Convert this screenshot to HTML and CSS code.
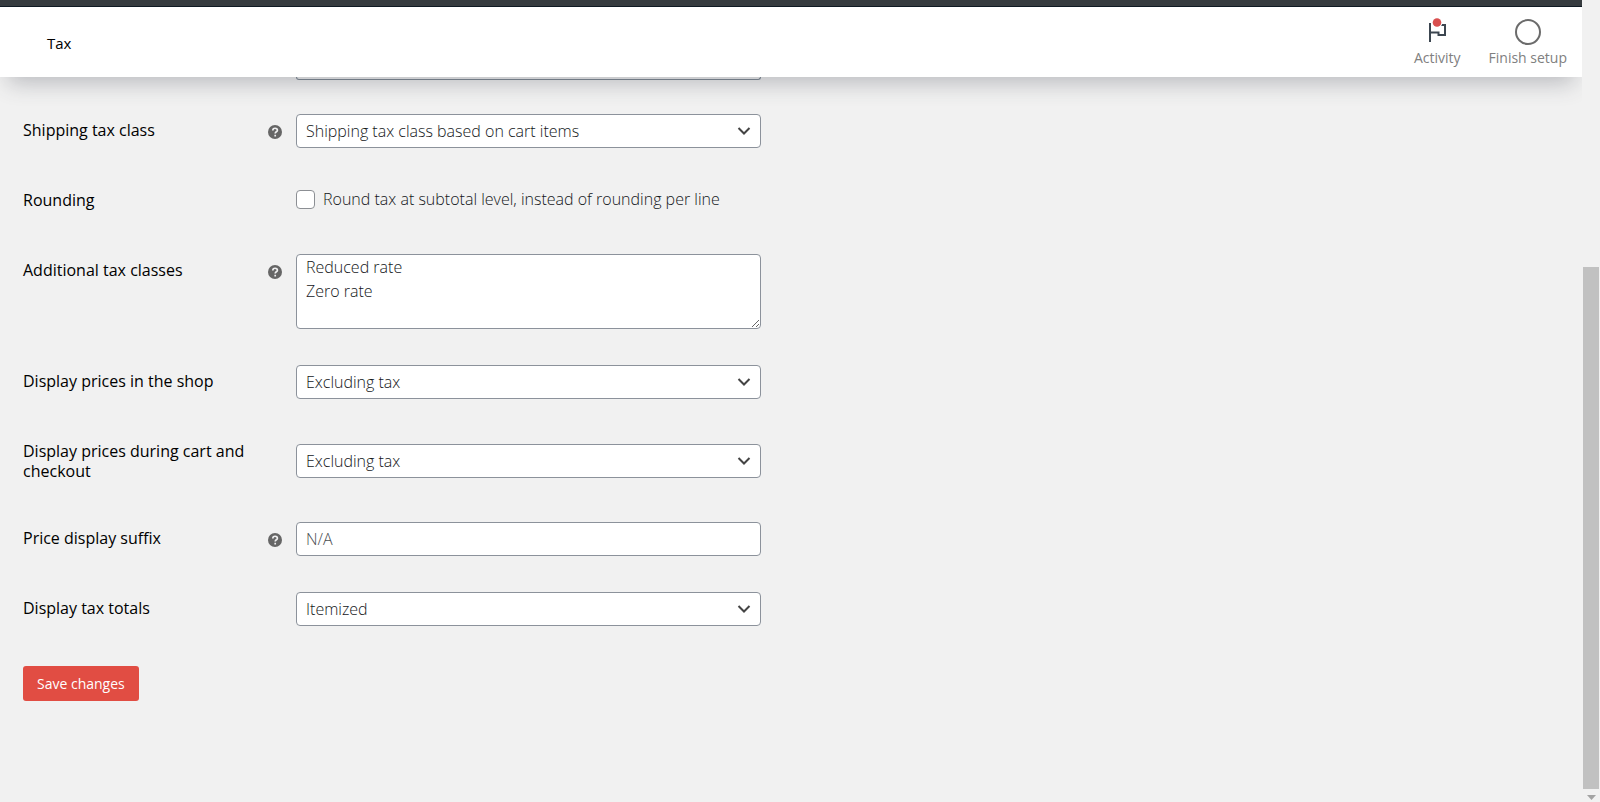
FILE: index.html
```html
<!DOCTYPE html>
<html lang="en">
<head>
<meta charset="utf-8">
<title>Tax settings</title>
<link rel="stylesheet" href="styles.css">
</head>
<body>
<div class="viewport">
  <div class="page">
    <div class="admin-bar"></div>
    <header class="header">
      <h1 class="header-title">Tax</h1>
      <div class="header-actions">
        <button type="button" class="action">
          <svg class="action-icon" viewBox="0 0 28 28" aria-hidden="true">
            <path d="M7 5v19M7 14.500h8.500v2.500h6.500v-10h-4" fill="none" stroke="#3c4650" stroke-width="2"/>
            <circle cx="14" cy="4.500" r="5.300" fill="#fff"/>
            <circle cx="14" cy="4.500" r="4.300" fill="#d94f4f"/>
          </svg>
          <span>Activity</span>
        </button>
        <button type="button" class="action">
          <svg class="action-icon" viewBox="0 0 28 28" aria-hidden="true">
            <circle cx="14" cy="14" r="12" fill="none" stroke="#6b6b6b" stroke-width="2"/>
          </svg>
          <span>Finish setup</span>
        </button>
      </div>
    </header>

    <form class="settings">
      <div class="scrolled-field"></div>
      <div class="row">
        <div class="label-cell">
          <label for="shipping">Shipping tax class</label>
          <svg class="help" viewBox="0 0 14 14" aria-hidden="true"><circle cx="7" cy="7" r="7" fill="#666"/><path d="M4.800 5.500c0-3 4.600-2.900 4.600-.3 0 1.600-2.200 1.600-2.200 3.300M7.200 9.700v1.800" fill="none" stroke="#f0f0f1" stroke-width="1.700"/></svg>
        </div>
        <div class="control-cell"><select id="shipping" class="control select"><option>Shipping tax class based on cart items</option></select></div>
      </div>
      <div class="row">
        <div class="label-cell"><span>Rounding</span></div>
        <div class="control-cell">
          <label class="check-label"><input type="checkbox" class="check"><span>Round tax at subtotal level, instead of rounding per line</span></label>
        </div>
      </div>
      <div class="row">
        <div class="label-cell">
          <label for="classes">Additional tax classes</label>
          <svg class="help" viewBox="0 0 14 14" aria-hidden="true"><circle cx="7" cy="7" r="7" fill="#666"/><path d="M4.800 5.500c0-3 4.600-2.900 4.600-.3 0 1.600-2.200 1.600-2.200 3.300M7.200 9.700v1.800" fill="none" stroke="#f0f0f1" stroke-width="1.700"/></svg>
        </div>
        <div class="control-cell"><textarea id="classes" class="control textarea">Reduced rate
Zero rate</textarea></div>
      </div>
      <div class="row">
        <div class="label-cell"><label for="shop">Display prices in the shop</label></div>
        <div class="control-cell"><select id="shop" class="control select"><option>Excluding tax</option></select></div>
      </div>
      <div class="row">
        <div class="label-cell"><label for="cart">Display prices during cart and checkout</label></div>
        <div class="control-cell"><select id="cart" class="control select"><option>Excluding tax</option></select></div>
      </div>
      <div class="row">
        <div class="label-cell">
          <label for="suffix">Price display suffix</label>
          <svg class="help" viewBox="0 0 14 14" aria-hidden="true"><circle cx="7" cy="7" r="7" fill="#666"/><path d="M4.800 5.500c0-3 4.600-2.900 4.600-.3 0 1.600-2.200 1.600-2.200 3.300M7.200 9.700v1.800" fill="none" stroke="#f0f0f1" stroke-width="1.700"/></svg>
        </div>
        <div class="control-cell"><input type="text" id="suffix" class="control" placeholder="N/A"></div>
      </div>
      <div class="row">
        <div class="label-cell"><label for="totals">Display tax totals</label></div>
        <div class="control-cell"><select id="totals" class="control select"><option>Itemized</option></select></div>
      </div>
      <button type="submit" class="save">Save changes</button>
    </form>
  </div>
  <div class="scrollbar" aria-hidden="true">
    <div class="scroll-thumb"></div>
    <svg class="scroll-arrow" viewBox="0 0 9 5"><path d="M0 0h9L4.500 5z" fill="#a3a3a3"/></svg>
  </div>
</div>
</body>
</html>
```
FILE: styles.css
```css
* {
  box-sizing: border-box;
}

body {
  margin: 0;
  background: #f1f1f1;
  color: #1d2327;
  font-family: "Open Sans", "Noto Sans", sans-serif;
  font-size: 16px;
}

.viewport {
  display: flex;
  min-height: 100vh;
}

.page {
  flex: 1;
  min-width: 0;
  overflow: hidden;
}

.admin-bar {
  height: 7px;
  background: #363b3f;
  border-bottom: 1px solid #101a24;
}

.header {
  position: relative;
  z-index: 1;
  display: flex;
  align-items: center;
  justify-content: space-between;
  height: 70px;
  padding: 2px 15px 0 47px;
  background: #fff;
  box-shadow: 0 14px 22px -8px rgba(60, 64, 76, 0.3);
}

.header-title {
  margin: 0;
  font-size: 15px;
  font-weight: 400;
  color: #000;
}

.header-actions {
  display: flex;
  gap: 28px;
}

.action {
  display: flex;
  flex-direction: column;
  align-items: center;
  gap: 2px;
  padding: 0;
  border: 0;
  background: none;
  color: #808080;
  font: 400 14px/20px "Open Sans", "Noto Sans", sans-serif;
}

.action-icon {
  width: 28px;
  height: 28px;
}

.settings {
  padding: 0 23px;
}

.scrolled-field {
  width: 465px;
  height: 3px;
  margin: 0 0 16px 273px;
  border: 1px solid #7e8993;
  border-top: 0;
  border-radius: 0 0 4px 4px;
}

.row {
  display: grid;
  grid-template-columns: 259px 465px;
  column-gap: 14px;
  min-height: 70px;
}

.label-cell {
  display: flex;
  align-items: flex-start;
  justify-content: space-between;
  gap: 12px;
  padding: 24px 0 23px;
  color: #000;
  font-size: 16px;
  line-height: 20px;
}

.help {
  flex: none;
  width: 14px;
  height: 14px;
  margin-top: 5px;
}

.control-cell {
  display: flex;
  align-items: center;
  padding: 18px 0;
}

.control {
  width: 100%;
  height: 34px;
  padding: 0 9px;
  border: 1px solid #8c929b;
  border-radius: 4px;
  background-color: #fff;
  color: #14171a;
  font: 300 16px/24px "Open Sans", "Noto Sans", sans-serif;
}

.control::placeholder {
  color: #4a4e52;
  opacity: 1;
}

.select {
  appearance: none;
  background-image: url("data:image/svg+xml,%3Csvg xmlns='http://www.w3.org/2000/svg' viewBox='0 0 14 10'%3E%3Cpath d='M1.500 2l5.500 5.500L12.500 2' fill='none' stroke='%23444' stroke-width='2'/%3E%3C/svg%3E");
  background-repeat: no-repeat;
  background-position: right 9px center;
  background-size: 14px 10px;
}

.textarea {
  display: block;
  height: 75px;
  padding: 0 9px;
  resize: vertical;
}

.check-label {
  display: flex;
  align-items: center;
  gap: 8px;
  margin-bottom: 4px;
  color: #14171a;
  font-weight: 300;
}

.check {
  appearance: none;
  width: 19px;
  height: 19px;
  margin: 0;
  border: 1px solid #8c8f94;
  border-radius: 4px;
  background: #fff;
}

.save {
  height: 35px;
  margin-top: 22px;
  padding: 0 14px;
  border: 0;
  border-radius: 3px;
  background: #e14d43;
  color: #fff;
  font: 400 14px/20px "Open Sans", "Noto Sans", sans-serif;
}

.scrollbar {
  display: flex;
  flex-direction: column;
  align-items: center;
  justify-content: flex-end;
  width: 18px;
  height: 100vh;
  padding: 0 1px 2px;
  background: #f1f1f1;
}

.scroll-thumb {
  width: 100%;
  height: 65.200%;
  background: #c1c1c1;
}

.scroll-arrow {
  width: 9px;
  height: 5px;
  margin-top: 6px;
}
```
